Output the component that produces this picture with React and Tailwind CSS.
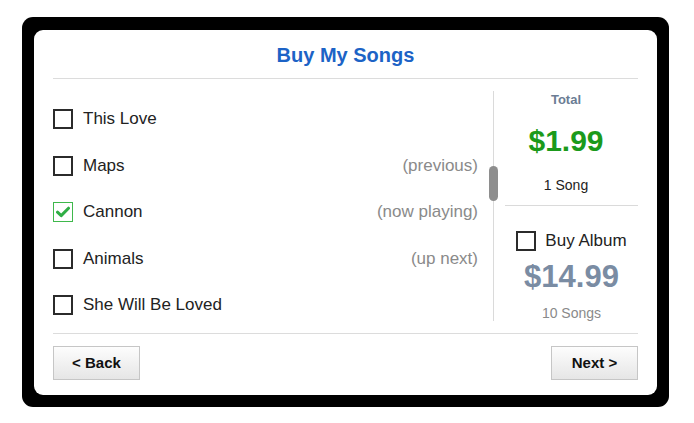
const font = { fontFamily: '"Liberation Sans", Arial, Helvetica, sans-serif' }

const songs = [
  { title: "This Love", note: "" },
  { title: "Maps", note: "(previous)" },
  { title: "Cannon", note: "(now playing)", checked: true },
  { title: "Animals", note: "(up next)" },
  { title: "She Will Be Loved", note: "" },
]

function Checkbox({ checked }) {
  if (checked) {
    return (
      <span className="flex size-[20px] shrink-0 items-center justify-center border-[1.5px] border-[#3fb84c] bg-white">
        <svg width="14" height="12" viewBox="0 0 14 12">
          <path d="M1.5 6.2 L5.2 9.6 L12.5 2.2" fill="none" stroke="#2fae45" strokeWidth="3" strokeLinecap="round" strokeLinejoin="round" />
        </svg>
      </span>
    )
  }
  return <span className="block size-[20px] shrink-0 border-2 border-[#2b2b2b] bg-white" />
}

function Button({ children }) {
  return (
    <button
      type="button"
      className="flex h-[34px] w-[87px] items-center justify-center border border-[#c6c6c6] bg-gradient-to-b from-[#fdfdfd] to-[#e6e6e6] text-[15px] font-bold text-[#111]"
    >
      {children}
    </button>
  )
}

export default function App() {
  return (
    <div className="min-h-[423px] w-[694px] bg-white pl-[22px] pt-[17px]" style={font}>
      <div className="h-[390px] w-[647px] rounded-[11px] bg-black pl-[12px] pr-[12px] pt-[13px] pb-[12px]">
        <div className="flex h-full flex-col rounded-[9px] bg-white px-[19px]">
          <div className="flex h-[49px] items-center justify-center border-b border-[#dcdcdc] pt-[1px]">
            <h1 className="text-[20px] font-bold text-[#1c63c6]">Buy My Songs</h1>
          </div>

          <div className="flex h-[254px] py-[12px]">
            <div className="flex flex-1 flex-col gap-[26.5px] pr-[15px] pt-[18px]">
              {songs.map((s) => (
                <div key={s.title} className="flex h-[20px] items-center">
                  <Checkbox checked={s.checked} />
                  <span className="ml-[10px] text-[17px] text-[#222]">{s.title}</span>
                  <span className="ml-auto text-[17px] text-[#8a8a8a]">{s.note}</span>
                </div>
              ))}
            </div>

            <div className="relative flex w-[145px] flex-col border-l border-[#dadada]">
              <span className="absolute left-[-5px] top-[75px] h-[35px] w-[9px] rounded-full bg-[#8e8e8e]" />
              <div className="flex h-[18px] items-center justify-center text-[13px] font-bold text-[#6b7d94]">Total</div>
              <div className="mt-[12px] flex h-[38px] items-center justify-center text-[30px] font-bold text-[#1b9a1b]">$1.99</div>
              <div className="mt-[17px] flex h-[18px] items-center justify-center text-[14px] text-[#222]">1 Song</div>
              <div className="ml-[11px] mt-[11px] flex flex-col border-t border-[#dadada]">
                <div className="mt-[23px] flex h-[24px] items-center justify-center gap-[9px]">
                  <Checkbox />
                  <span className="text-[17px] text-[#222]">Buy Album</span>
                </div>
                <div className="mt-[5px] flex h-[38px] items-center justify-center text-[31px] font-bold text-[#7a8ca3]">$14.99</div>
                <div className="mt-[8px] flex h-[18px] items-center justify-center text-[14px] text-[#8a8a8a]">10 Songs</div>
              </div>
            </div>
          </div>

          <div className="flex items-center justify-between border-t border-[#dcdcdc] pt-[12px]">
            <Button>&lt; Back</Button>
            <Button>Next &gt;</Button>
          </div>
        </div>
      </div>
    </div>
  )
}
